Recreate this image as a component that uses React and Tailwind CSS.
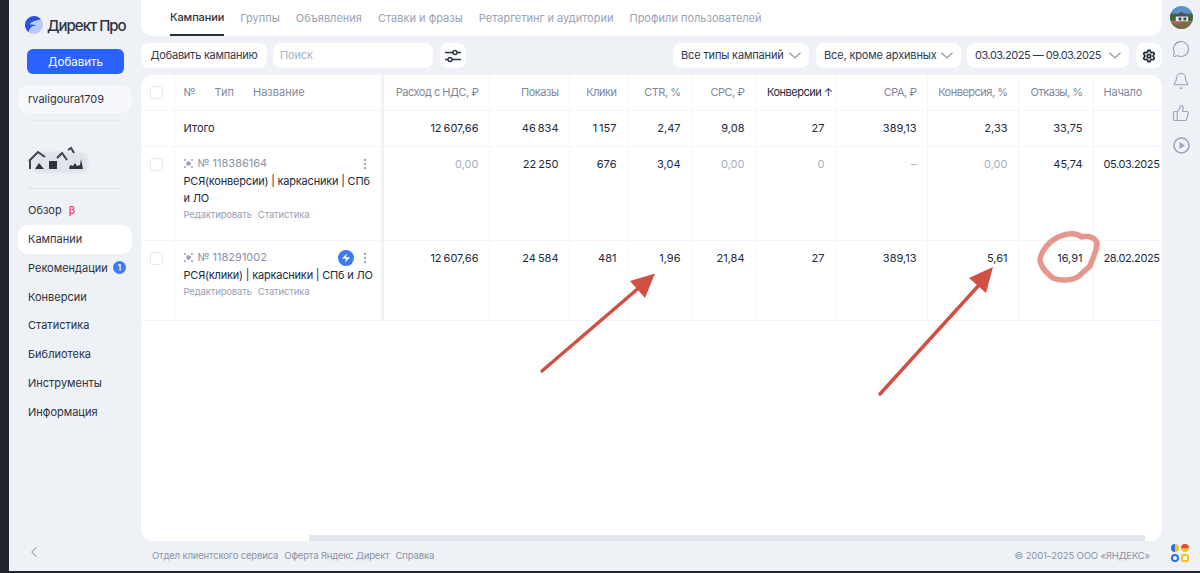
import React from 'react';
import { ChevronLeft, MessageCircle, Bell, ThumbsUp, Settings, Zap, EllipsisVertical } from 'lucide-react';

const tabs = ['Кампании', 'Группы', 'Объявления', 'Ставки и фразы', 'Ретаргетинг и аудитории', 'Профили пользователей'];
const nav = ['Обзор', 'Кампании', 'Рекомендации', 'Конверсии', 'Статистика', 'Библиотека', 'Инструменты', 'Информация'];

const colWidths = ['w-[33px]', 'w-[208px]', 'w-[107px]', 'w-[80px]', 'w-[58px]', 'w-[64px]', 'w-[64px]', 'w-[80px]', 'w-[92px]', 'w-[91px]', 'w-[75px]', 'w-[69px]'];
const heads = ['Расход с НДС, ₽', 'Показы', 'Клики', 'CTR, %', 'CPC, ₽', 'Конверсии ↑', 'CPA, ₽', 'Конверсия, %', 'Отказы, %'];
// numbers use a thin space between thousands, as in the cabinet
const total = ['12\u2009607,66', '46\u2009834', '1\u2009157', '2,47', '9,08', '27', '389,13', '2,33', '33,75'];
const rowOne = [
  ['0,00', true], ['22\u2009250'], ['676'], ['3,04'], ['0,00', true], ['0', true], ['–', true], ['0,00', true], ['45,74'],
];
const rowTwo = [['12\u2009607,66'], ['24\u2009584'], ['481'], ['1,96'], ['21,84'], ['27'], ['389,13'], ['5,61'], ['16,91']];

const Logo = () => (
  <svg width="18" height="18" viewBox="0 0 18 18" className="shrink-0">
    <circle cx="9" cy="9" r="9" fill="#b9c9fb" />
    <path d="M9 0a9 9 0 0 0-9 9c0 3 1.400 5.600 3.600 7.200C4 12 7 9.500 11.500 9.500 9 8.600 6.500 8.400 4.600 8.800 6 5.600 10.500 4 16 3.400 14.400 1.300 11.800 0 9 0z" fill="#2a50d8" />
  </svg>
);

// blurred account picture under the login
const HousePic = () => (
  <svg width="62" height="30" viewBox="0 0 62 30" className="block">
    <defs>
      <filter id="soft"><feGaussianBlur stdDeviation="0.55" /></filter>
      <filter id="softer"><feGaussianBlur stdDeviation="1.500" /></filter>
    </defs>
    <rect x="4" y="8" width="56" height="21" rx="7" fill="#e0e3ea" filter="url(#softer)" />
    <g filter="url(#soft)" fill="none" stroke="#3d434e" strokeWidth="2">
      <path d="M1 17l9-9 7 5M2 17v8" />
      <path d="M29 14l5-5 5 7M40 6l3-2 3 5" />
    </g>
    <g filter="url(#soft)" fill="#2f3540">
      <path d="M7 25l4-6 5 6z" />
      <rect x="21" y="17" width="8" height="8" />
      <path d="M41 25l1-4 3 1 2-3 2 3 3-1 1-6 2 10z" />
    </g>
  </svg>
);

const HouseAvatar = () => (
  <svg width="23" height="23" viewBox="0 0 24 24" className="block">
    <defs>
      <clipPath id="round"><circle cx="12" cy="12" r="12" /></clipPath>
    </defs>
    <g clipPath="url(#round)">
      <rect width="24" height="10" fill="#5b93c9" />
      <rect y="8" width="24" height="8" fill="#46613f" />
      <path d="M6 11l6-4 7 4v6H6z" fill="#e6e8e4" />
      <path d="M4 11l8-5 8 5z" fill="#4b5158" />
      <rect x="9" y="12" width="3" height="3" fill="#39475a" />
      <rect x="14" y="12" width="3" height="3" fill="#39475a" />
      <rect y="16" width="24" height="8" fill="#7a6a48" />
      <rect x="3" y="17" width="9" height="2" fill="#c2584e" />
    </g>
  </svg>
);

const Sliders = () => (
  <svg width="16" height="14" viewBox="0 0 16 14" fill="none" stroke="#2a3347" strokeWidth="1.400">
    <path d="M0 3.500h8M12 3.500h4M0 10.500h3M7 10.500h9" />
    <circle cx="10" cy="3.500" r="2" />
    <circle cx="5" cy="10.500" r="2" />
  </svg>
);

const Chevron = () => (
  <svg width="12" height="7" viewBox="0 0 12 7" fill="none" stroke="#8d96aa" strokeWidth="1.200" className="shrink-0">
    <path d="M0.500 0.700L6 6 11.500 0.700" />
  </svg>
);

const PlayRound = () => (
  <svg width="17" height="17" viewBox="0 0 17 17" className="mt-[15px]">
    <circle cx="8.500" cy="8.500" r="7.500" fill="none" stroke="currentColor" strokeWidth="1.500" />
    <path d="M6.500 5l5.500 3.500-5.500 3.500z" fill="currentColor" />
  </svg>
);

const CampaignMark = () => (
  <svg width="9" height="9" viewBox="0 0 9 9" fill="#98a1b3" className="shrink-0">
    <circle cx="4.500" cy="4.500" r="2.300" />
    <circle cx="1" cy="1" r="1" />
    <circle cx="8" cy="1" r="1" />
    <circle cx="1" cy="8" r="1" />
    <circle cx="8" cy="8" r="1" />
  </svg>
);

const Checkbox = () => <div className="w-[13px] h-[13px] rounded-[3px] border border-[#e7eaf1] bg-white" />;

const Pill = ({ children, className = '' }) => (
  <div className={`h-[25px] bg-white rounded-[8px] flex items-center whitespace-nowrap ${className}`}>{children}</div>
);

const Select = ({ label, className = '' }) => (
  <Pill className={`justify-between pl-2 pr-2 text-[#2f3a52] ${className}`}>
    <span>{label}</span>
    <Chevron />
  </Pill>
);

const Cell = ({ children, muted }) => (
  <td className={`align-top pr-[10px] pt-[9px] text-right whitespace-nowrap border-r border-[#f3f5f9] ${muted ? 'text-[#a5aec0]' : 'text-[#222a3c]'}`}>
    {children}
  </td>
);

const NameCell = ({ id, name, bolt }) => (
  <td className="align-top pl-[9px] pt-[10px] pr-[4px] border-r-[3px] border-[#f0f2f6]">
    <div className="flex items-center h-[14px] text-[#8a93a7]">
      <CampaignMark />
      <span className="ml-[5px]">№ {id}</span>
      <div className="ml-auto flex items-center mr-[5px]">
        {bolt && (
          <span className="w-4 h-4 rounded-full bg-[#3d7bf5] flex items-center justify-center mr-[4px]">
            <Zap size={10} fill="white" strokeWidth={0} />
          </span>
        )}
        <EllipsisVertical size={14} strokeWidth={2} className="text-[#9aa2b4]" />
      </div>
    </div>
    <div className="mt-[2px] leading-[17px] text-[#222a3c] tracking-[-0.2px]">{name}</div>
    <div className="mt-[1px] text-[9.500px] tracking-[-0.15px] leading-[14px] text-[#98a1b3] flex gap-[6px]">
      <span>Редактировать</span>
      <span>Статистика</span>
    </div>
  </td>
);

export default function App() {
  return (
    <div className="relative w-[1200px] h-[573px] overflow-hidden bg-[#eef1f6] flex flex-col text-[11px] font-['Inter','Noto_Sans',sans-serif] text-[#222a3c]">
      <div className="flex flex-1 min-h-0 border-l-[9px] border-[#22252e]">
        {/* sidebar */}
        <aside className="w-[132px] shrink-0 flex flex-col relative">
          <div className="flex items-center gap-[4px] ml-[16px] mt-[16px] h-[18px]">
            <Logo />
            <span className="text-[15px] leading-none font-medium text-[#2c3240] tracking-[-1px] whitespace-nowrap">Директ Про</span>
          </div>
          <button className="mt-[15px] ml-[18px] w-[97px] h-[25px] rounded-[6px] bg-[#2a62ff] text-white text-[11.500px] pt-[2px]">Добавить</button>
          <div className="mt-[11px] mx-[9px] h-[28px] rounded-[10px] bg-[#f7f8fb] flex items-center pl-[10px] text-[11px] text-[#2c3240] pt-[1px]">rvaligoura1709</div>
          <div className="mt-[7px] mx-[19px] h-px bg-[#e8eaf0]" />
          <div className="mt-[25px] ml-[19px] h-[30px] -translate-y-[2px]"><HousePic /></div>
          <div className="mt-[12px] mx-[19px] h-px bg-[#dfe3ec]" />
          <nav className="mt-[7px] mx-[9px] flex flex-col text-[11px] text-[#2c3240]">
            {nav.map((item, i) => (
              <div key={item} className={`h-[28.800px] rounded-[10px] pl-[10px] flex items-center whitespace-nowrap ${i === 1 ? 'bg-white' : ''}`}>
                {item}
                {i === 0 && <span className="ml-[7px] text-[#f0212b]">β</span>}
                {i === 2 && (
                  <span className="ml-[5px] w-[13px] h-[13px] rounded-full bg-[#3d7bf5] text-white text-[9px] font-medium flex items-center justify-center">1</span>
                )}
              </div>
            ))}
          </nav>
          <ChevronLeft size={18} strokeWidth={1.400} className="absolute left-[16px] bottom-[10px] text-[#8d96aa]" />
        </aside>

        {/* main column */}
        <main className="w-[1021px] shrink-0 flex flex-col min-h-0">
          <div className="h-[36px] bg-white rounded-b-[12px] flex gap-[16px] pl-[29px] shrink-0 text-[#9aa2b6]">
            {tabs.map((t, i) => (
              <div key={t} className={`h-full flex items-center whitespace-nowrap ${i === 0 ? 'text-[#2c3240] font-medium tracking-[-0.1px] border-b-2 border-[#2c3240]' : ''}`}>{t}</div>
            ))}
          </div>

          <div className="mt-[7px] flex items-center shrink-0 text-[#2f3a52] tracking-[-0.15px]">
            <Pill className="w-[126px] justify-center tracking-[-0.25px]">Добавить кампанию</Pill>
            <Pill className="ml-[6px] w-[160px] pl-[7px] text-[#a8b0c2]">Поиск</Pill>
            <Pill className="ml-[7px] w-[26px] justify-center"><Sliders /></Pill>
            <Select label="Все типы кампаний" className="ml-[207px] w-[136px]" />
            <Select label="Все, кроме архивных" className="ml-[7px] w-[145px]" />
            <Select label="03.03.2025 — 09.03.2025" className="ml-[6px] w-[162px] tracking-[-0.5px]" />
            <Pill className="ml-[7px] w-[26px] justify-center"><Settings size={14} strokeWidth={3} className="text-[#222a3c]" /></Pill>
          </div>

          {/* campaigns table */}
          <div className="mt-[7px] flex-1 bg-white rounded-[12px] overflow-hidden relative">
            <table className="table-fixed border-collapse w-[1021px]">
              <colgroup>
                {colWidths.map((w, i) => <col key={i} className={w} />)}
              </colgroup>
              <tbody>
                <tr className="h-[35px] border-b border-[#f3f5f9] text-[#7f889d]">
                  <td className="border-r border-[#f3f5f9] pl-[9px]"><Checkbox /></td>
                  <td className="pl-[9px] border-r-[3px] border-[#f0f2f6]">
                    <div className="flex">
                      <span>№</span>
                      <span className="ml-[19px]">Тип</span>
                      <span className="ml-[19px]">Название</span>
                    </div>
                  </td>
                  {heads.map((h, i) => (
                    <td key={h} className={`text-right whitespace-nowrap border-r border-[#f3f5f9] tracking-[-0.5px] ${i === 5 ? 'pr-[2px] text-[#222a3c]' : 'pr-[10px]'}`}>{h}</td>
                  ))}
                  <td className="pl-[10px] tracking-[-0.2px]">Начало</td>
                </tr>
                <tr className="h-[36px] border-b border-[#f3f5f9]">
                  <td className="border-r border-[#f3f5f9]" />
                  <td className="pl-[9px] border-r-[3px] border-[#f0f2f6]">Итого</td>
                  {total.map((v, i) => (
                    <td key={i} className="pr-[10px] text-right whitespace-nowrap border-r border-[#f3f5f9]">{v}</td>
                  ))}
                  <td />
                </tr>
                <tr className="h-[94px] border-b border-[#f3f5f9]">
                  <td className="align-top pl-[9px] pt-[11px] border-r border-[#f3f5f9]"><Checkbox /></td>
                  <NameCell id="118386164" name="РСЯ(конверсии) | каркасники | СПб и ЛО" />
                  {rowOne.map(([v, muted], i) => <Cell key={i} muted={muted}>{v}</Cell>)}
                  <td className="align-top pl-[10px] pt-[9px] whitespace-nowrap tracking-[-0.4px]">05.03.2025</td>
                </tr>
                <tr className="h-[80px] border-b border-[#f3f5f9]">
                  <td className="align-top pl-[9px] pt-[11px] border-r border-[#f3f5f9]"><Checkbox /></td>
                  <NameCell id="118291002" name="РСЯ(клики) | каркасники | СПб и ЛО" bolt />
                  {rowTwo.map(([v], i) => <Cell key={i}>{v}</Cell>)}
                  <td className="align-top pl-[10px] pt-[9px] whitespace-nowrap tracking-[-0.4px]">28.02.2025</td>
                </tr>
              </tbody>
            </table>
            <div className="absolute left-[168px] right-[17px] bottom-0 h-[6px] bg-[#e3e6ef]" />
          </div>

          <div className="h-[30px] shrink-0 flex items-center justify-between pl-[11px] pr-[12px] pt-[1px] text-[9.500px] tracking-[-0.15px] text-[#8a93a7]">
            <div className="flex gap-[6px]">
              <span>Отдел клиентского сервиса</span>
              <span>Оферта Яндекс Директ</span>
              <span>Справка</span>
            </div>
            <span>© 2001–2025 ООО «ЯНДЕКС»</span>
          </div>
        </main>

        {/* right rail */}
        <aside className="flex-1 flex flex-col items-center pt-[6px] text-[#98a3bb] relative">
          <HouseAvatar />
          <MessageCircle size={18} strokeWidth={1.500} className="mt-[11px]" />
          <Bell size={18} strokeWidth={1.500} className="mt-[14px]" />
          <ThumbsUp size={18} strokeWidth={1.500} className="mt-[14px]" />
          <PlayRound />
          <div className="absolute left-[9px] bottom-[9px] grid grid-cols-2 gap-[2px]">
            <span className="w-[8px] h-[8px] rounded-full bg-[linear-gradient(90deg,#2f6bec_50%,#f5c518_50%)]" />
            <span className="w-[8px] h-[8px] rounded-full bg-[linear-gradient(180deg,#e8453c_50%,#f5c518_50%)]" />
            <span className="w-[8px] h-[8px] rounded-full border-2 border-[#2f6bec] bg-white" />
            <span className="w-[8px] h-[8px] rounded-[2px] border-2 border-[#f5c518] bg-white" />
          </div>
        </aside>
      </div>
      <div className="h-[2px] shrink-0 bg-[#22252e]" />

      {/* hand drawn annotations over the screenshot */}
      <svg width="1200" height="573" viewBox="0 0 1200 573" className="absolute left-0 top-0 pointer-events-none">
        <g stroke="#d05044" strokeWidth="3.500" strokeLinecap="round" fill="none">
          <path d="M542 371L641 286" />
          <path d="M880 394L980 284" />
        </g>
        <path d="M655 273.500L630 281L645 298z" fill="#d05044" />
        <path d="M993 267L969 278L986 293z" fill="#d05044" />
        <path d="M1058 237C1068 233 1077 233 1082 237C1088 235 1096 238 1097 243C1097 250 1093 258 1090 266C1086 270 1083 272 1079 276C1072 281 1060 281 1053 278C1047 273 1041 268 1040 260C1041 250 1050 241 1058 237z" fill="none" stroke="#e5978e" strokeWidth="5.500" strokeLinejoin="round" />
      </svg>
    </div>
  );
}
